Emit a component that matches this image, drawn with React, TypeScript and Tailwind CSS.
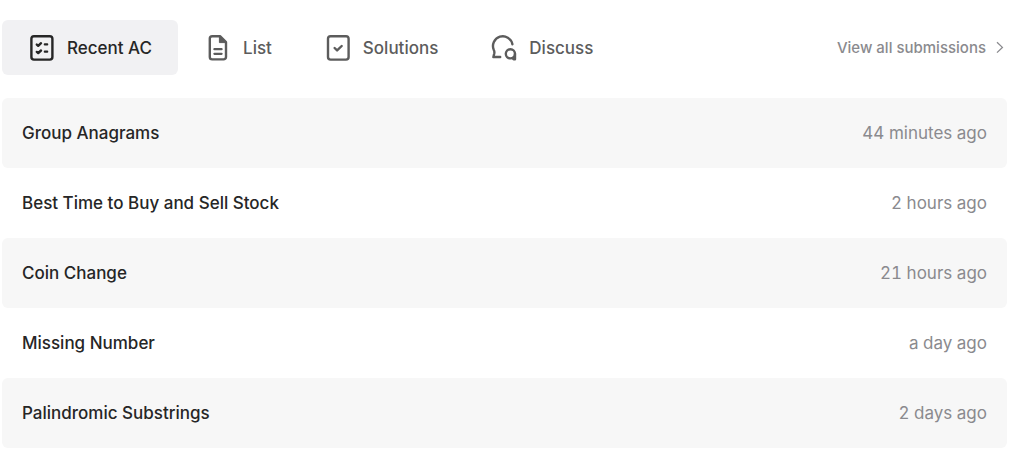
import type { ReactNode } from "react";

type Tab = {
  label: string;
  icon: ReactNode;
};

type Submission = {
  title: string;
  time: string;
};

const iconProps = {
  viewBox: "0 0 28 28",
  fill: "none",
  stroke: "currentColor",
  strokeWidth: 2.4,
  strokeLinecap: "round",
  strokeLinejoin: "round",
  "aria-hidden": true,
  className: "size-7 shrink-0",
} as const;

function RecentIcon() {
  return (
    <svg {...iconProps}>
      <rect x="3.4" y="2.2" width="21" height="23.4" rx="2.6" />
      <path d="M8.8 10.6l1.4 1.2 2.8-2.6M8.8 17.9l1.4 1.2 2.8-2.6" strokeWidth="2.4" />
      <path d="M16.8 10.4h2.4M16.8 17.7h2.4" strokeWidth="2.2" />
    </svg>
  );
}

function ListIcon() {
  return (
    <svg {...iconProps}>
      <path d="M16 2.2H8.2a2.4 2.4 0 0 0-2.4 2.4v18.4a2.4 2.4 0 0 0 2.4 2.4h11.4a2.4 2.4 0 0 0 2.4-2.4V8.2z" />
      <path d="M15.4 2.2V8.6H22z" fill="currentColor" strokeWidth="1" />
      <path d="M10.4 15.2h7.2M10.4 19.8h7.2" strokeWidth="2.2" />
    </svg>
  );
}

function SolutionsIcon() {
  return (
    <svg {...iconProps}>
      <rect x="4" y="2.2" width="20.6" height="23.4" rx="2.6" />
      <path d="M10.6 14l2.5 2.4 4.6-4.4" />
    </svg>
  );
}

function DiscussIcon() {
  return (
    <svg {...iconProps}>
      <path d="M22.4 10.2A9.8 9.8 0 1 0 3.8 16Q4.6 17.4 4.3 19.2L3.4 23H10.2" />
      <circle cx="20.4" cy="19.8" r="4.6" />
      <path d="M25 20v5.2h-1.4l-1-1.2" />
    </svg>
  );
}

const tabs: Tab[] = [
  { label: "Recent AC", icon: <RecentIcon /> },
  { label: "List", icon: <ListIcon /> },
  { label: "Solutions", icon: <SolutionsIcon /> },
  { label: "Discuss", icon: <DiscussIcon /> },
];

const submissions: Submission[] = [
  { title: "Group Anagrams", time: "44 minutes ago" },
  { title: "Best Time to Buy and Sell Stock", time: "2 hours ago" },
  { title: "Coin Change", time: "21 hours ago" },
  { title: "Missing Number", time: "a day ago" },
  { title: "Palindromic Substrings", time: "2 days ago" },
];

function TabButton({ tab, active }: { tab: Tab; active: boolean }) {
  return (
    <button
      type="button"
      role="tab"
      aria-selected={active}
      className={
        active
          ? "flex h-[55px] items-center gap-[11px] rounded-md bg-[#f1f1f3] px-[26px] text-[#262626]"
          : "flex h-[55px] items-center gap-[11px] rounded-md px-[26px] text-[#5c5c5c]"
      }
    >
      {tab.icon}
      {tab.label}
    </button>
  );
}

export default function App() {
  return (
    <main className="bg-white pt-5 pr-3.5 pb-[3px] pl-0.5 font-['Inter',sans-serif] text-[17px] leading-6">
      <header className="flex items-center justify-between">
        <div role="tablist" className="flex font-medium">
          {tabs.map((tab, index) => (
            <TabButton key={tab.label} tab={tab} active={index === 0} />
          ))}
        </div>
        <a
          href="#submissions"
          className="flex items-center gap-2 pr-[3px] text-[15px] font-medium text-[#8a8a8e]"
        >
          View all submissions
          <svg
            viewBox="0 0 10 14"
            fill="none"
            stroke="currentColor"
            strokeWidth="1.3"
            aria-hidden="true"
            className="h-3.5 w-2.5"
          >
            <path d="M3 1.2l5.4 5.2L3 11.6" />
          </svg>
        </a>
      </header>

      <ul id="submissions" className="mt-[23px]">
        {submissions.map((item) => (
          <li key={item.title} className="rounded-md odd:bg-[#f7f7f7]">
            <a
              href="#submissions"
              className="flex h-[70px] items-center justify-between px-5"
            >
              <span className="font-medium text-[#262626]">{item.title}</span>
              <span className="text-[#8a8a8e] tabular-nums">{item.time}</span>
            </a>
          </li>
        ))}
      </ul>
    </main>
  );
}
